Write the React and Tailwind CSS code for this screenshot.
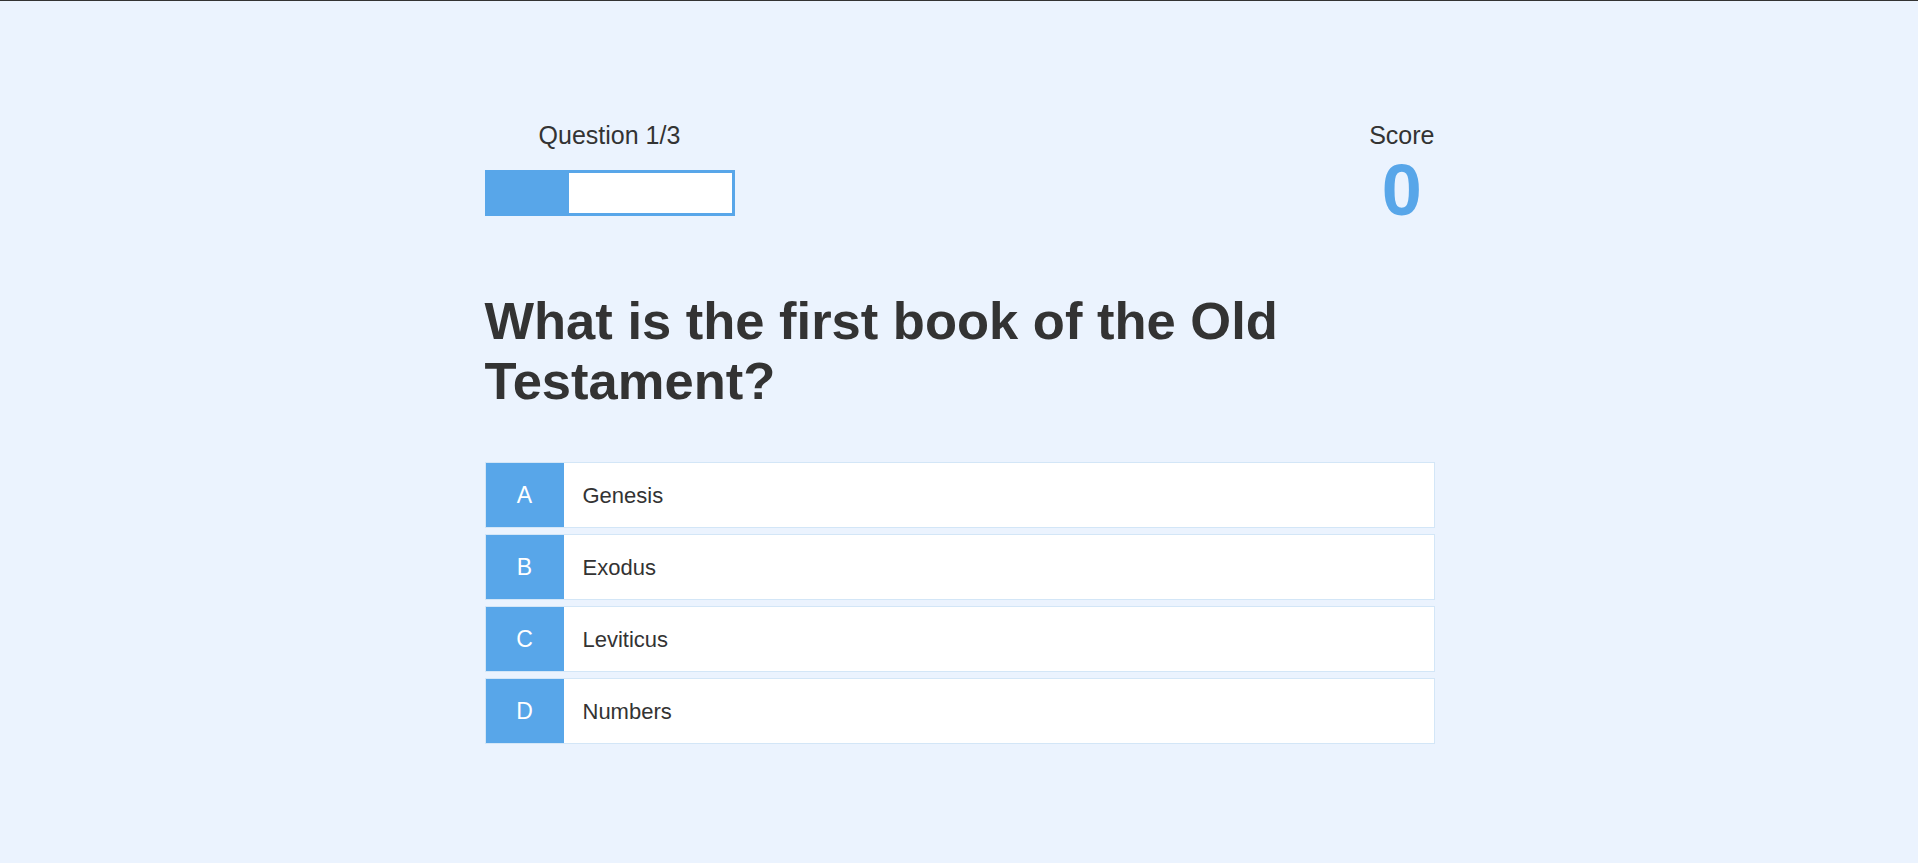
import React from "react";

const options = [
  { letter: "A", text: "Genesis" },
  { letter: "B", text: "Exodus" },
  { letter: "C", text: "Leviticus" },
  { letter: "D", text: "Numbers" },
];

export default function App() {
  return (
    <div
      className="min-h-screen w-full bg-[#ebf3fe] border-t border-[#333333] text-[#333333]"
      style={{ fontFamily: '"Liberation Sans", Arial, sans-serif' }}
    >
      <div className="mx-auto w-[950px] pt-[120px] pl-[1px] box-content">
        <div className="flex justify-between items-start h-[95px]">
          <div className="flex flex-col items-center w-[250px]">
            <div className="text-[25px] leading-[28px]">Question 1/3</div>
            <div className="mt-[21px] w-[250px] h-[46px] border-[3px] border-[#58a6e9] bg-white">
              <div className="h-full w-1/3 bg-[#58a6e9]"></div>
            </div>
          </div>
          <div className="flex flex-col items-center">
            <div className="text-[25px] leading-[28px]">Score</div>
            <div className="mt-[5px] text-[72px] leading-none font-bold text-[#58a6e9]">0</div>
          </div>
        </div>
        <h1 className="mt-[75px] text-[52.5px] leading-[60px] font-bold text-[#333333]">
          What is the first book of the Old Testament?
        </h1>
        <div className="mt-[51px] flex flex-col gap-[6px]">
          {options.map((o) => (
            <div
              key={o.letter}
              className="flex h-[66px] border border-[#d3e6f7] bg-white"
            >
              <div className="w-[78px] flex items-center justify-center bg-[#58a6e9] text-white text-[23px]">
                {o.letter}
              </div>
              <div className="flex items-center pl-[19px] text-[22px] text-[#333333]">
                {o.text}
              </div>
            </div>
          ))}
        </div>
      </div>
    </div>
  );
}
